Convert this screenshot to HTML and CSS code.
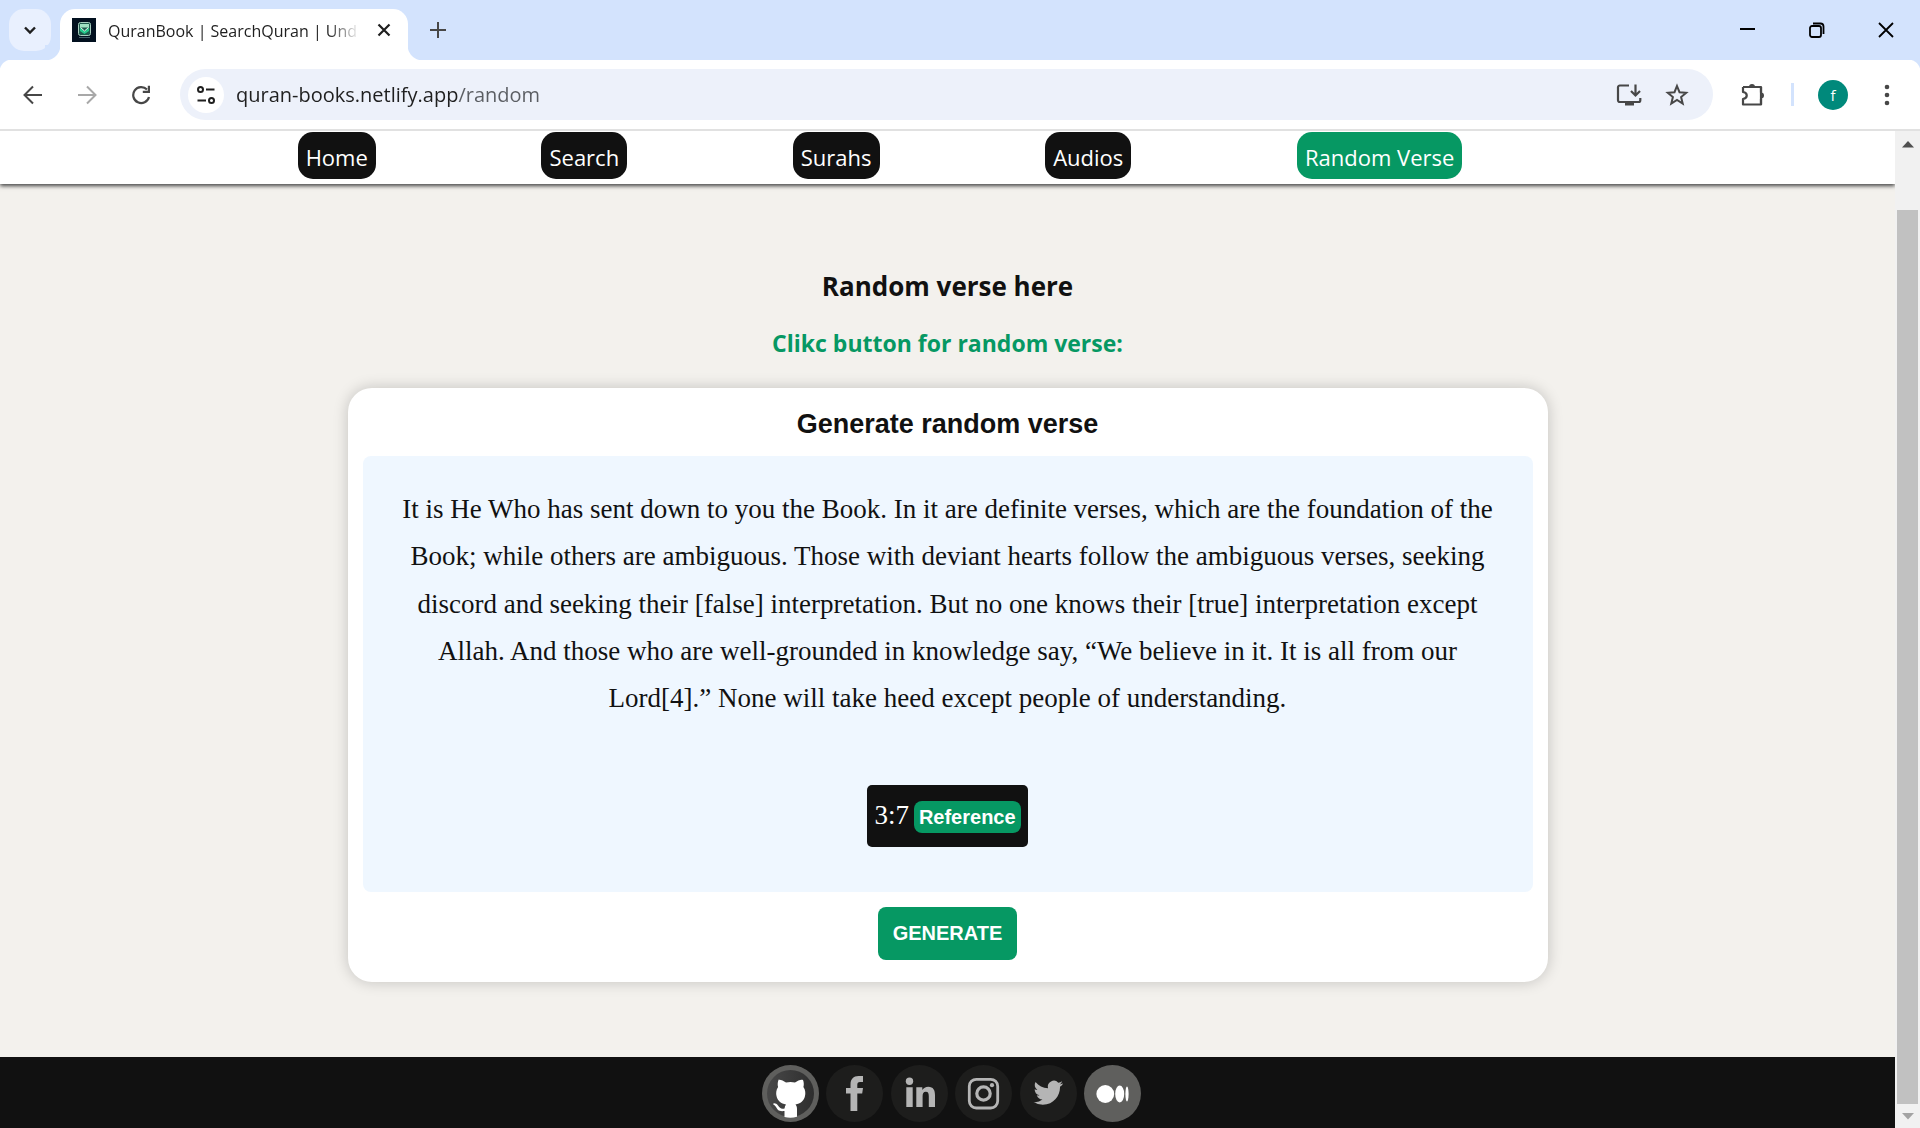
FILE: index.html
```html
<!DOCTYPE html>
<html lang="en">
<head>
<meta charset="utf-8">
<meta name="viewport" content="width=device-width, initial-scale=1">
<title>QuranBook | SearchQuran</title>
<link rel="stylesheet" href="styles.css">
</head>
<body>
<div class="tabstrip">
  <button class="tab-search" aria-label="Search tabs"><svg width="14" height="14" viewBox="0 0 14 14"><path d="M2 4.5l5 5 5-5" fill="none" stroke="#1f1f1f" stroke-width="2.4"/></svg></button>
  <div class="tab">
    <svg class="favicon" width="24" height="24" viewBox="0 0 24 24"><rect width="24" height="24" fill="#02101f"/><rect x="6.500" y="4.500" width="12" height="13" rx="2" fill="#1d5a4c" stroke="#a9cfc0"/><path d="M8 6h9v3.500H8z" fill="#9fe0c2"/><path d="M8 9.500l4.500 4 4.500-4v3.500l-4.500 3-4.500-3z" fill="#25c98b"/><path d="M8.500 9.500l4 3.500 4-3.500" fill="none" stroke="#eafff5"/><path d="M7 19.500h11" stroke="#46616a"/></svg>
    <span class="tab-title">QuranBook | SearchQuran | Und</span>
    <button class="icon-btn" aria-label="Close tab"><svg width="14" height="14" viewBox="0 0 14 14"><path d="M1.500 1.500l11 11M12.500 1.500l-11 11" stroke="#1f1f1f" stroke-width="2.200"/></svg></button>
  </div>
  <button class="new-tab" aria-label="New tab"><svg width="16" height="16" viewBox="0 0 16 16"><path d="M8 0v16M0 8h16" stroke="#474747" stroke-width="2"/></svg></button>
  <div class="window-controls">
    <button aria-label="Minimize"><svg width="16" height="16" viewBox="0 0 16 16"><path d="M0 7h15" stroke="#000" stroke-width="2"/></svg></button>
    <button aria-label="Restore"><svg width="16" height="16" viewBox="0 0 16 16"><rect x="1" y="4" width="11" height="11" rx="2" fill="none" stroke="#000" stroke-width="1.800"/><path d="M4 1.500h7.500a3 3 0 0 1 3 3V12" fill="none" stroke="#000" stroke-width="1.800"/></svg></button>
    <button aria-label="Close"><svg width="16" height="16" viewBox="0 0 16 16"><path d="M1 1l14 14M15 1L1 15" stroke="#000" stroke-width="1.800"/></svg></button>
  </div>
</div>
<div class="toolbar">
  <button class="tool" aria-label="Back"><svg width="20" height="20" viewBox="0 0 20 20"><path d="M19 10H2M10 1.500L1.500 10l8.500 8.500" fill="none" stroke="#474747" stroke-width="2"/></svg></button>
  <button class="tool" aria-label="Forward"><svg width="20" height="20" viewBox="0 0 20 20"><path d="M1 10h17M10 1.500l8.500 8.500-8.500 8.500" fill="none" stroke="#a8a8a8" stroke-width="2"/></svg></button>
  <button class="tool" aria-label="Reload"><svg width="20" height="20" viewBox="0 0 20 20"><path d="M16 4.500A8 8 0 1 0 18 12" fill="none" stroke="#474747" stroke-width="2.200"/><path d="M19 .8V8h-7.200V5.800h5V.8z" fill="#474747"/></svg></button>
  <div class="omnibox">
    <button class="site-info" aria-label="Site information"><svg width="20" height="20" viewBox="0 0 20 20"><g fill="none" stroke="#1f1f1f" stroke-width="2"><circle cx="4.500" cy="4.500" r="2.500"/><path d="M10 4.500h8.500M1.500 15.500H10"/><circle cx="15.500" cy="15.500" r="2.500"/></g></svg></button>
    <input class="url" type="text" aria-label="Address" value="quran-books.netlify.app/random">
    <button class="box-btn" aria-label="Install app"><svg width="26" height="24" viewBox="0 0 26 24"><path d="M13 2.500H4A1.800 1.800 0 0 0 2 4.300v13A1.800 1.800 0 0 0 4 19h18.500a1.800 1.800 0 0 0 1.800-1.800V15" fill="none" stroke="#474747" stroke-width="2.200"/><path d="M9 19h9v3.500H9z" fill="#474747"/><path d="M19.500 1.500v11M15 8l4.500 4.500L24 8" fill="none" stroke="#474747" stroke-width="2.200"/></svg></button>
    <button class="box-btn" aria-label="Bookmark"><svg width="24" height="24" viewBox="0 0 24 24"><path d="M12 3l2.500 6.200 6.700.5-5.100 4.300 1.600 6.500L12 17l-5.700 3.500 1.600-6.500-5.100-4.300 6.700-.5z" fill="none" stroke="#474747" stroke-width="2"/></svg></button>
  </div>
  <button class="ext" aria-label="Extensions"><svg width="26" height="26" viewBox="0 0 26 26"><path d="M3 5h18v5.500M3 5v5c5 .8 5 6.200 0 7v5.500h18V17" fill="none" stroke="#474747" stroke-width="2.200" stroke-linejoin="round"/><path d="M21 5v17.500" stroke="#474747" stroke-width="2.200"/><path d="M9 5a3 3 0 0 1 6 0zM21 10.500a3 3 0 0 1 0 6z" fill="#474747"/></svg></button>
  <span class="divider"></span>
  <button class="avatar" aria-label="Profile">f</button>
  <button class="menu" aria-label="Menu"><svg width="6" height="22" viewBox="0 0 6 22"><g fill="#474747"><circle cx="3" cy="3" r="2.300"/><circle cx="3" cy="11" r="2.300"/><circle cx="3" cy="19" r="2.300"/></g></svg></button>
</div>
<div class="viewport">
  <div class="page">
    <nav class="nav">
      <a href="#">Home</a>
      <a href="#">Search</a>
      <a href="#">Surahs</a>
      <a href="#">Audios</a>
      <a href="#" class="active">Random Verse</a>
    </nav>
    <main class="main">
      <h1 class="heading">Random verse here</h1>
      <h2 class="subheading">Clikc button for random verse:</h2>
      <section class="card">
        <h2 class="card-title">Generate random verse</h2>
        <div class="verse">
          <p class="verse-text">It is He Who has sent down to you the Book. In it are definite verses, which are the foundation of the Book; while others are ambiguous. Those with deviant hearts follow the ambiguous verses, seeking discord and seeking their [false] interpretation. But no one knows their [true] interpretation except Allah. And those who are well-grounded in knowledge say, “We believe in it. It is all from our Lord[4].” None will take heed except people of understanding.</p>
          <p class="reference">3:7 <span class="badge">Reference</span></p>
        </div>
        <button class="generate">GENERATE</button>
      </section>
    </main>
    <footer class="footer">
      <div class="social">
        <a class="github" href="#" aria-label="GitHub"><svg viewBox="0 0 57 57"><defs><linearGradient id="g"><stop offset="0" stop-color="#484848"/><stop offset="1" stop-color="#2e2e2e"/></linearGradient></defs><circle cx="28.500" cy="28.500" r="28.500" fill="#5f5f5d"/><circle cx="28.500" cy="28.500" r="23.500" fill="url(#g)"/><path d="M16 15c2-1 5 .5 8 2.500 3-.7 6-.7 9 0 3-2 6-3.500 8-2.500 1 2.500 1 5 .4 7 2.200 3 2.200 6.500 1.600 9-1 5-4.500 7.500-9.500 8.500 1.300 1.500 1.500 3 1.500 5v7.300a24 24 0 0 1-12.500.2V46c-6 .8-7-1.500-8.500-4-1-1.700-2-2-3-3 .7-1.500 3.500-.8 5 1.500 1.700 2.500 3 3.800 6.500 3 .2-1.700.7-3 1.500-4-5-1-8.500-3.500-9.500-8.500-.6-2.500-.5-6 1.600-9-.6-2-.6-4.500.4-7z" fill="#fff"/></svg></a>
        <a href="#" aria-label="Facebook"><svg viewBox="0 0 57 57"><path d="M24.500 46V28.500H20V23h4.500v-3.500c0-5.500 3-8.500 8-8.500H37v6h-3c-2 0-2.700 1-2.700 3v3H37l-.8 5.500h-4.900V46z" fill="#b5b5b5"/></svg></a>
        <a href="#" aria-label="LinkedIn"><svg viewBox="0 0 57 57"><g fill="#b5b5b5"><circle cx="18.500" cy="16.300" r="3.700"/><path d="M15.300 22.300h6.400V42h-6.400zM25.300 22.300h6v2.800c1.200-2 3.300-3.300 6-3.300 5 0 6.700 3.500 6.700 8.500V42h-6.200V31.500c0-2.800-.5-4.700-2.900-4.700-2.600 0-3.300 2-3.300 4.700V42h-6.300z"/></g></svg></a>
        <a href="#" aria-label="Instagram"><svg viewBox="0 0 57 57"><g fill="none" stroke="#b5b5b5" stroke-width="2.800"><rect x="14.300" y="14.300" width="28.400" height="28.700" rx="7"/><circle cx="28.500" cy="28.500" r="6.700" stroke-width="3.200"/></g><circle cx="37" cy="20.200" r="2.100" fill="#b5b5b5"/></svg></a>
        <a href="#" aria-label="Twitter"><svg viewBox="0 0 57 57"><path transform="translate(13.500 13) scale(1.230)" d="M23.950 4.570a10 10 0 0 1-2.820.77 4.960 4.960 0 0 0 2.160-2.720c-.95.550-2 .95-3.130 1.180a4.920 4.920 0 0 0-8.380 4.480C7.690 8.090 4.070 6.130 1.640 3.160a4.920 4.920 0 0 0 1.520 6.570 4.900 4.900 0 0 1-2.230-.61v.06a4.920 4.920 0 0 0 3.950 4.830 5 5 0 0 1-2.210.08 4.940 4.940 0 0 0 4.600 3.420A9.870 9.870 0 0 1 0 19.540a13.990 13.990 0 0 0 7.550 2.210c9.050 0 14-7.500 14-13.980 0-.21 0-.42-.02-.63a9.940 9.940 0 0 0 2.460-2.550z" fill="#b5b5b5"/></svg></a>
        <a class="medium" href="#" aria-label="Medium"><svg viewBox="0 0 57 57"><g fill="#fff"><circle cx="21.300" cy="29" r="8.900"/><ellipse cx="35.700" cy="29" rx="4.500" ry="8.400"/><ellipse cx="43" cy="29" rx="1.600" ry="7.500"/></g></svg></a>
      </div>
    </footer>
  </div>
  <div class="scrollbar">
    <svg width="12" height="7" viewBox="0 0 12 7"><path d="M6 0l6 6.500H0z" fill="#505050"/></svg>
    <span class="thumb"></span>
    <svg width="12" height="7" viewBox="0 0 12 7"><path d="M0 0h12L6 6.500z" fill="#a3a3a3"/></svg>
  </div>
</div>
</body>
</html>
```
FILE: styles.css
```css
* { box-sizing: border-box; }
body {
  margin: 0;
  min-height: 100vh;
  display: flex;
  flex-direction: column;
  background: #fff;
  font-family: "Open Sans", "Noto Sans", sans-serif;
}
button { border: 0; padding: 0; background: none; font: inherit; display: flex; align-items: center; justify-content: center; }
svg { display: block; flex: none; }
h1, h2, p { margin: 0; }

/* Browser tab strip */
.tabstrip { height: 60px; padding: 9px 0 0 9px; display: flex; background: #d3e3fd; }
.tab-search { width: 42px; height: 42px; border-radius: 15px; background: #e9f0fe; }
.tab {
  position: relative;
  width: 348px;
  margin-left: 9px;
  padding: 0 17px 9px 12px;
  display: flex;
  align-items: center;
  background: #fff;
  border-radius: 15px 15px 0 0;
}
.tab::before, .tab::after { content: ""; position: absolute; bottom: 0; width: 15px; height: 15px; }
.tab::before { left: -15px; background: radial-gradient(circle at 0 0, #d3e3fd 15px, #fff 16px); }
.tab::after { right: -15px; background: radial-gradient(circle at 100% 0, #d3e3fd 15px, #fff 16px); }
.tab-title {
  width: 252px;
  margin: 2px 17px 0 12px;
  white-space: nowrap;
  font-size: 16px;
  line-height: 24px;
  color: #1f1f1f;
  -webkit-mask-image: linear-gradient(to right, #000 220px, transparent 252px);
}
.icon-btn { width: 14px; }
.new-tab { width: 42px; height: 42px; margin-left: 9px; }
.window-controls { display: flex; margin-left: auto; height: 42px; }
.window-controls button { width: 69px; }

/* Browser toolbar */
.toolbar {
  height: 71px;
  padding: 0 15px 0 6px;
  display: flex;
  align-items: center;
  border-bottom: 2px solid #e1e1e1;
  background: radial-gradient(circle at 12px 12px, #fff 12px, #d3e3fd 13px) 0 0 / 12px 12px no-repeat,
    radial-gradient(circle at 0 12px, #fff 12px, #d3e3fd 13px) 100% 0 / 12px 12px no-repeat, #fff;
}
.tool { width: 54px; height: 51px; }
.omnibox {
  flex: 1;
  height: 51px;
  margin-left: 12px;
  padding: 0 12px 0 8px;
  display: flex;
  align-items: center;
  border-radius: 26px;
  background: #edf1fa;
}
.site-info { width: 36px; height: 36px; border-radius: 50%; background: #fff; }
.url {
  flex: 1;
  min-width: 0;
  margin-left: 12px;
  padding: 0;
  border: 0;
  outline: 0;
  font: 20px/30px "Open Sans", "Noto Sans", sans-serif;
  color: #1f1f1f;
  background: linear-gradient(to right, #1f1f1f 222px, #5a5d62 222px);
  -webkit-background-clip: text;
  background-clip: text;
  -webkit-text-fill-color: transparent;
}
.box-btn { width: 48px; height: 48px; }
.ext { width: 40px; height: 40px; margin-left: 20px; }
.divider { width: 3px; height: 23px; margin-left: 18px; background: #d3e3fd; }
.avatar { width: 30px; height: 30px; margin-left: 24px; border-radius: 50%; background: #00897b; color: #fff; font-size: 15px; }
.menu { width: 36px; height: 36px; margin-left: 21px; }

/* Page */
.viewport { flex: 1; display: flex; background: #f3f1ed; }
.page { flex: 1; display: flex; flex-direction: column; }
.nav {
  position: relative;
  height: 53px;
  padding: 1px 267px 0 132px;
  display: flex;
  justify-content: space-evenly;
  align-items: flex-start;
  background: #fff;
  box-shadow: 0 2px 4px #444;
  clip-path: inset(0 0 -8px 0);
}
.nav a {
  height: 47px;
  padding: 3px 8px 0;
  border-radius: 15px;
  background: #111;
  color: #fff;
  font-size: 22px;
  line-height: 44px;
  text-decoration: none;
  white-space: nowrap;
}
.nav .active { background: #069863; }
.main { flex: 1; padding: 84px 24px 75px; text-align: center; }
.heading { font-size: 26px; line-height: 36px; color: #111; }
.subheading { margin-top: 24px; font-size: 23px; line-height: 30px; color: #069863; }
.card {
  max-width: 1200px;
  margin: 30px auto 0;
  padding: 15px 15px 22px;
  border-radius: 24px;
  background: #fff;
  box-shadow: 0 0 15px rgba(0, 0, 0, .2);
}
.card-title { font: bold 27px/42px "Liberation Sans", Arial, sans-serif; color: #111; }
.verse {
  margin-top: 11px;
  padding: 30px 30px 45px;
  border-radius: 8px;
  background: #eff7ff;
  font: 27px/1.75 "Liberation Serif", "Times New Roman", serif;
  color: #111;
}
.reference {
  display: flex;
  align-items: baseline;
  gap: 5px;
  width: fit-content;
  margin: 63px auto 0;
  padding: 7px;
  border-radius: 5px;
  background: #111;
  color: #fff;
}
.badge {
  padding: 5px;
  border-radius: 8px;
  background: #069863;
  font: bold 20px/22px "Liberation Sans", Arial, sans-serif;
}
.generate {
  height: 53px;
  margin: 15px auto 0;
  padding: 0 15px;
  border-radius: 8px;
  background: #069863;
  color: #fff;
  font: bold 20px/22px "Liberation Sans", Arial, sans-serif;
}
.footer { height: 71px; padding-top: 8px; background: #111; }
.social { width: 387px; margin: 0 auto; padding-left: 8px; display: flex; justify-content: space-between; }
.social a { width: 57px; height: 57px; border-radius: 50%; background: #1d1d1c; }
.social .medium { background: #5f5f5d; }
.scrollbar {
  width: 25px;
  padding: 10px 2px 8px;
  display: flex;
  flex-direction: column;
  align-items: center;
  background: #f1f1f1;
}
.thumb { flex: 1; width: 21px; margin: 62px 0 9px; background: #c1c1c1; }
```
